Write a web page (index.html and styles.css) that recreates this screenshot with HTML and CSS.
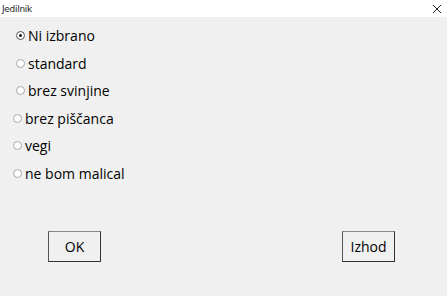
FILE: index.html
```html
<!DOCTYPE html>
<html>
<head>
<meta charset="utf-8">
<link rel="stylesheet" href="styles.css">
</head>
<body>
<div class="window">
  <div class="titlebar">
    <span class="title">Jedilnik</span>
    <svg class="close" width="10" height="10" viewBox="0 0 10 10"><path d="M1 1 L9 9 M9 1 L1 9" stroke="#222" stroke-width="1"/></svg>
  </div>
  <div class="content">
    <div class="options">
      <div class="opt first"><span class="radio checked"></span><span class="lbl">Ni izbrano</span></div>
      <div class="opt first"><span class="radio"></span><span class="lbl">standard</span></div>
      <div class="opt first"><span class="radio"></span><span class="lbl">brez svinjine</span></div>
      <div class="opt"><span class="radio"></span><span class="lbl">brez piščanca</span></div>
      <div class="opt"><span class="radio"></span><span class="lbl">vegi</span></div>
      <div class="opt"><span class="radio"></span><span class="lbl">ne bom malical</span></div>
    </div>
    <div class="buttons">
      <button class="btn">OK</button>
      <button class="btn">Izhod</button>
    </div>
  </div>
</div>
</body>
</html>
```
FILE: styles.css
```css
html, body { margin: 0; padding: 0; }
body { width: 447px; height: 296px; background: #f0f0f0; font-family: "Open Sans", "Noto Sans", sans-serif; overflow: hidden; }
.window { display: flex; flex-direction: column; height: 296px; }
.titlebar { height: 17px; background: #fff; display: flex; align-items: center; justify-content: space-between; padding: 0 5px 0 2px; }
.title { font-size: 9px; color: #222; font-family: "DejaVu Sans", sans-serif; letter-spacing: -0.3px; }
.close { display: block; }
.content { flex: 1; display: flex; flex-direction: column; }
.options { display: flex; flex-direction: column; padding-top: 5px; }
.opt { height: 27.5px; display: flex; align-items: center; padding-left: 13px; }
.opt.first { padding-left: 16px; }
.radio { width: 7px; height: 7px; border: 1px solid #a8a8a8; border-radius: 50%; background: #fff; margin-right: 3px; position: relative; box-sizing: content-box; }
.radio.checked { border-color: #555; }
.radio.checked::after { content: ""; position: absolute; left: 2px; top: 2px; width: 3px; height: 3px; border-radius: 50%; background: #111; }
.lbl { font-size: 14px; color: #000; }
.buttons { display: flex; justify-content: space-between; padding: 44px 52px 0 48px; }
.btn { width: 53px; height: 31px; background: #f0f0f0; border: 1px solid #333; border-top-color: #888; border-left-color: #555; font-family: "Open Sans", sans-serif; font-size: 14px; color: #000; padding: 0; }
```
